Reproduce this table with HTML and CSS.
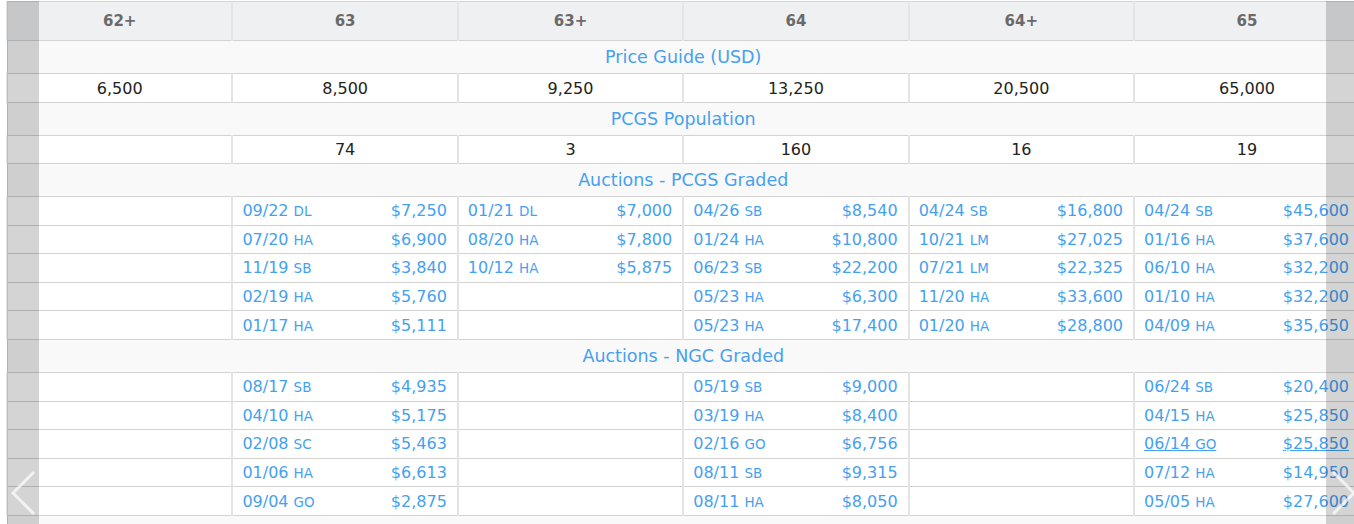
FILE: index.html
```html
<!DOCTYPE html>
<html lang="en">
<head>
<meta charset="utf-8">
<title>Grades</title>
<link rel="stylesheet" href="styles.css">
</head>
<body>
<div class="carousel">
  <table class="grades">
    <colgroup>
      <col><col><col><col><col><col>
    </colgroup>
    <thead>
      <tr><th>62+</th><th>63</th><th>63+</th><th>64</th><th>64+</th><th>65</th></tr>
    </thead>
    <tbody>
      <tr class="section"><td colspan="6">Price Guide (USD)</td></tr>
      <tr class="values"><td>6,500</td><td>8,500</td><td>9,250</td><td>13,250</td><td>20,500</td><td>65,000</td></tr>
      <tr class="section"><td colspan="6">PCGS Population</td></tr>
      <tr class="values pop"><td></td><td>74</td><td>3</td><td>160</td><td>16</td><td>19</td></tr>
      <tr class="section"><td colspan="6">Auctions - PCGS Graded</td></tr>
      <tr class="sales">
        <td></td>
        <td><a class="sale" href="#"><span>09/22 <small>DL</small></span><span>$7,250</span></a></td>
        <td><a class="sale" href="#"><span>01/21 <small>DL</small></span><span>$7,000</span></a></td>
        <td><a class="sale" href="#"><span>04/26 <small>SB</small></span><span>$8,540</span></a></td>
        <td><a class="sale" href="#"><span>04/24 <small>SB</small></span><span>$16,800</span></a></td>
        <td><a class="sale" href="#"><span>04/24 <small>SB</small></span><span>$45,600</span></a></td>
      </tr>
      <tr class="sales">
        <td></td>
        <td><a class="sale" href="#"><span>07/20 <small>HA</small></span><span>$6,900</span></a></td>
        <td><a class="sale" href="#"><span>08/20 <small>HA</small></span><span>$7,800</span></a></td>
        <td><a class="sale" href="#"><span>01/24 <small>HA</small></span><span>$10,800</span></a></td>
        <td><a class="sale" href="#"><span>10/21 <small>LM</small></span><span>$27,025</span></a></td>
        <td><a class="sale" href="#"><span>01/16 <small>HA</small></span><span>$37,600</span></a></td>
      </tr>
      <tr class="sales">
        <td></td>
        <td><a class="sale" href="#"><span>11/19 <small>SB</small></span><span>$3,840</span></a></td>
        <td><a class="sale" href="#"><span>10/12 <small>HA</small></span><span>$5,875</span></a></td>
        <td><a class="sale" href="#"><span>06/23 <small>SB</small></span><span>$22,200</span></a></td>
        <td><a class="sale" href="#"><span>07/21 <small>LM</small></span><span>$22,325</span></a></td>
        <td><a class="sale" href="#"><span>06/10 <small>HA</small></span><span>$32,200</span></a></td>
      </tr>
      <tr class="sales">
        <td></td>
        <td><a class="sale" href="#"><span>02/19 <small>HA</small></span><span>$5,760</span></a></td>
        <td></td>
        <td><a class="sale" href="#"><span>05/23 <small>HA</small></span><span>$6,300</span></a></td>
        <td><a class="sale" href="#"><span>11/20 <small>HA</small></span><span>$33,600</span></a></td>
        <td><a class="sale" href="#"><span>01/10 <small>HA</small></span><span>$32,200</span></a></td>
      </tr>
      <tr class="sales">
        <td></td>
        <td><a class="sale" href="#"><span>01/17 <small>HA</small></span><span>$5,111</span></a></td>
        <td></td>
        <td><a class="sale" href="#"><span>05/23 <small>HA</small></span><span>$17,400</span></a></td>
        <td><a class="sale" href="#"><span>01/20 <small>HA</small></span><span>$28,800</span></a></td>
        <td><a class="sale" href="#"><span>04/09 <small>HA</small></span><span>$35,650</span></a></td>
      </tr>
      <tr class="section"><td colspan="6">Auctions - NGC Graded</td></tr>
      <tr class="sales">
        <td></td>
        <td><a class="sale" href="#"><span>08/17 <small>SB</small></span><span>$4,935</span></a></td>
        <td></td>
        <td><a class="sale" href="#"><span>05/19 <small>SB</small></span><span>$9,000</span></a></td>
        <td></td>
        <td><a class="sale" href="#"><span>06/24 <small>SB</small></span><span>$20,400</span></a></td>
      </tr>
      <tr class="sales">
        <td></td>
        <td><a class="sale" href="#"><span>04/10 <small>HA</small></span><span>$5,175</span></a></td>
        <td></td>
        <td><a class="sale" href="#"><span>03/19 <small>HA</small></span><span>$8,400</span></a></td>
        <td></td>
        <td><a class="sale" href="#"><span>04/15 <small>HA</small></span><span>$25,850</span></a></td>
      </tr>
      <tr class="sales">
        <td></td>
        <td><a class="sale" href="#"><span>02/08 <small>SC</small></span><span>$5,463</span></a></td>
        <td></td>
        <td><a class="sale" href="#"><span>02/16 <small>GO</small></span><span>$6,756</span></a></td>
        <td></td>
        <td><a class="sale is-hover" href="#"><span>06/14 <small>GO</small></span><span>$25,850</span></a></td>
      </tr>
      <tr class="sales">
        <td></td>
        <td><a class="sale" href="#"><span>01/06 <small>HA</small></span><span>$6,613</span></a></td>
        <td></td>
        <td><a class="sale" href="#"><span>08/11 <small>SB</small></span><span>$9,315</span></a></td>
        <td></td>
        <td><a class="sale" href="#"><span>07/12 <small>HA</small></span><span>$14,950</span></a></td>
      </tr>
      <tr class="sales">
        <td></td>
        <td><a class="sale" href="#"><span>09/04 <small>GO</small></span><span>$2,875</span></a></td>
        <td></td>
        <td><a class="sale" href="#"><span>08/11 <small>HA</small></span><span>$8,050</span></a></td>
        <td></td>
        <td><a class="sale" href="#"><span>05/05 <small>HA</small></span><span>$27,600</span></a></td>
      </tr>
      <tr class="section"><td colspan="6"></td></tr>
    </tbody>
  </table>
  <button class="nav prev" type="button" aria-label="Previous">
    <svg class="chevron" width="26" height="46" viewBox="0 0 26 46"><polyline points="23,2 2,23 23,44" fill="none" stroke="#fff" stroke-width="3"/></svg>
  </button>
  <button class="nav next" type="button" aria-label="Next">
    <svg class="chevron" width="26" height="46" viewBox="0 0 26 46"><polyline points="3,2 24,23 3,44" fill="none" stroke="#fff" stroke-width="3"/></svg>
  </button>
</div>
</body>
</html>
```

FILE: styles.css
```css
html {
  overflow: hidden;
}

body {
  margin: 0;
  background: #fff;
  font-family: "DejaVu Sans", "Open Sans", sans-serif;
}

.carousel {
  position: relative;
  width: 1354px;
  margin: 1px 0 0 6px;
}

.grades {
  width: 1354px;
  table-layout: fixed;
  border-collapse: collapse;
  border: 1px solid #d3d3d3;
}

.grades th {
  height: 38px;
  padding: 0;
  background: #eff0f2;
  color: #6a6a6a;
  font-size: 15px;
  font-weight: bold;
  text-align: center;
  border-left: 2px solid #e3e4e6;
  border-bottom: 1px solid #d3d3d3;
}

.section td {
  height: 32px;
  padding: 0;
  background: #f9f9f9;
  color: #45a1ef;
  font-size: 17.5px;
  text-align: center;
  border-bottom: 1px solid #d3d3d3;
}

.values td {
  height: 28px;
  padding: 0;
  color: #222;
  font-size: 16px;
  text-align: center;
  border-left: 2px solid #e4e4e4;
  border-bottom: 1px solid #d3d3d3;
}

.values.pop td {
  height: 27px;
}

.sales td {
  height: 27.6px;
  padding: 0 10px 0 9px;
  font-size: 16px;
  border-left: 2px solid #e4e4e4;
  border-bottom: 1px solid #d3d3d3;
}

.sale {
  display: flex;
  justify-content: space-between;
  align-items: baseline;
  color: #45a1ef;
  text-decoration: none;
  white-space: nowrap;
}

.sale small {
  font-size: 13.5px;
}

.sale.is-hover {
  text-decoration: underline;
}

.nav {
  position: absolute;
  top: 0;
  bottom: 0;
  width: 32px;
  padding: 0;
  border: 0;
  background: rgba(0, 0, 0, 0.17);
}

.prev {
  left: 1px;
}

.next {
  left: 1320px;
}

.chevron {
  position: absolute;
  top: 469px;
  left: 4px;
  opacity: 0.7;
}
```
